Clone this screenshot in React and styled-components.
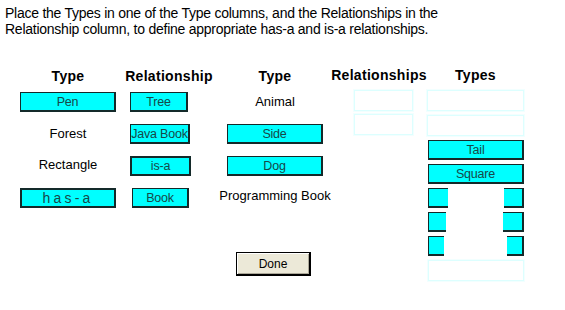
import React from "react";
import styled, { createGlobalStyle } from "styled-components";

const Global = createGlobalStyle`
  html, body { margin: 0; padding: 0; background: #ffffff; }
  body { font-family: "Liberation Sans", Arial, sans-serif; }
`;

const Page = styled.div`
  width: 565px;
  height: 310px;
  background: #fff;
  overflow: hidden;
`;

const Instruction = styled.p`
  margin: 0;
  padding: 5px 0 0 5px;
  font-size: 14px;
  line-height: 16px;
  color: #000;
  letter-spacing: -0.25px;
`;

const Board = styled.div`
  display: flex;
  align-items: flex-start;
  margin-top: 31px;
`;

const Column = styled.div`
  display: flex;
  flex-direction: column;
  width: ${(p) => p.$w}px;
  margin-left: ${(p) => p.$ml}px;
  align-items: ${(p) => p.$align || "center"};
`;

const Header = styled.div`
  font-weight: bold;
  font-size: 14px;
  line-height: 16px;
  letter-spacing: 0.3px;
  color: #000;
  white-space: nowrap;
  align-self: center;
  margin-top: ${(p) => (p.$up ? -1 : 0)}px;
  margin-bottom: ${(p) => (p.$up ? 7 : 8)}px;
`;

const Items = styled.div`
  display: flex;
  flex-direction: column;
  gap: ${(p) => p.$gap}px;
  align-items: ${(p) => p.$align || "center"};
  padding-left: ${(p) => p.$pl || 0}px;
  align-self: stretch;
`;

const Tile = styled.div`
  box-sizing: border-box;
  width: ${(p) => p.$w}px;
  height: 20px;
  margin-left: ${(p) => p.$ml || 0}px;
  background: #00ffff;
  border: 1px solid #142a2a;
  border-left-width: ${(p) => (p.$thick ? 2 : 1)}px;
  border-top-width: ${(p) => (p.$thick ? 2 : 1)}px;
  border-right-width: 2px;
  border-bottom-width: 2px;
  display: flex;
  align-items: center;
  justify-content: center;
  font-size: ${(p) => (p.$wide ? 14 : 12.5)}px;
  letter-spacing: ${(p) => (p.$wide ? 3.2 : -0.2)}px;
  color: #174848;
  white-space: nowrap;
`;

const Label = styled.div`
  height: 20px;
  display: flex;
  align-items: center;
  justify-content: center;
  font-size: 13px;
  color: #000;
  white-space: nowrap;
  padding-bottom: ${(p) => p.$lift || 2}px;
  box-sizing: border-box;
`;

const Slot = styled.div`
  box-sizing: border-box;
  width: ${(p) => p.$w}px;
  height: 21px;
  margin-left: ${(p) => p.$ml || 0}px;
  border: 1px solid #ddffff;
  box-shadow: 0 0 0 1px #f2ffff;
  background: #fff;
`;

const Masked = styled.div`
  display: flex;
  width: 96px;
  height: 20px;
  margin-left: 1px;
`;

const Cap = styled.div`
  box-sizing: border-box;
  width: ${(p) => p.$w}px;
  height: 20px;
  background: #00ffff;
  border-top: 1px solid #142a2a;
  border-bottom: 2px solid #142a2a;
  border-left: ${(p) => (p.$side === "l" ? "1px solid #142a2a" : "none")};
  border-right: ${(p) => (p.$side === "r" ? "2px solid #142a2a" : "none")};
`;

const Gap = styled.div`
  flex: 1;
  background: #fff;
`;

const Button = styled.button`
  box-sizing: border-box;
  width: 75px;
  height: 24px;
  margin-top: 44px;
  margin-left: 16px;
  align-self: flex-start;
  background: #ece9d8;
  border: 1px solid #000;
  border-right-width: 2px;
  border-bottom-width: 2px;
  box-shadow: inset 1px 1px 0 #fff, inset -1px -1px 0 #aca899;
  font-family: "Liberation Sans", Arial, sans-serif;
  font-size: 12px;
  color: #000;
  padding: 0;
`;

export default function App() {
  return (
    <Page>
      <Global />
      <Instruction>
        Place the Types in one of the Type columns, and the Relationships in the
        <br />
        Relationship column, to define appropriate has-a and is-a relationships.
      </Instruction>
      <Board>
        <Column $w={96} $ml={20}>
          <Header>Type</Header>
          <Items $gap={12}>
            <Tile $w={96}>Pen</Tile>
            <Label>Forest</Label>
            <Label $lift={4}>Rectangle</Label>
            <Tile $w={96} $thick $wide>has-a</Tile>
          </Items>
        </Column>
        <Column $w={90} $ml={8}>
          <Header>Relationship</Header>
          <Items $gap={12} $align="flex-start" $pl={6}>
            <Tile $w={58}>Tree</Tile>
            <Tile $w={60}>Java Book</Tile>
            <Tile $w={61} $thick>is-a</Tile>
            <Tile $w={57} $ml={2}>Book</Tile>
          </Items>
        </Column>
        <Column $w={110} $ml={6}>
          <Header>Type</Header>
          <Items $gap={12}>
            <Label>Animal</Label>
            <Tile $w={96}>Side</Tile>
            <Tile $w={96}>Dog</Tile>
            <Label $lift={6}>Programming Book</Label>
          </Items>
          <Button>Done</Button>
        </Column>
        <Column $w={90} $ml={4} $align="flex-start">
          <Header $up>Relationships</Header>
          <Items $gap={3} $align="flex-start" $pl={20}>
            <Slot $w={59} />
            <Slot $w={59} />
          </Items>
        </Column>
        <Column $w={97} $ml={3} $align="flex-start">
          <Header $up>Types</Header>
          <Items $gap={4} $align="flex-start">
            <Slot $w={97} />
            <Slot $w={97} />
            <Tile $w={96} $ml={1}>Tail</Tile>
            <Tile $w={96} $ml={1}>Square</Tile>
            <Masked>
              <Cap $w={20} $side="l" />
              <Gap />
              <Cap $w={20} $side="r" />
            </Masked>
            <Masked>
              <Cap $w={18} $side="l" />
              <Gap />
              <Cap $w={21} $side="r" />
            </Masked>
            <Masked>
              <Cap $w={16} $side="l" />
              <Gap />
              <Cap $w={17} $side="r" />
            </Masked>
            <Slot $w={96} $ml={1} />
          </Items>
        </Column>
      </Board>
    </Page>
  );
}
